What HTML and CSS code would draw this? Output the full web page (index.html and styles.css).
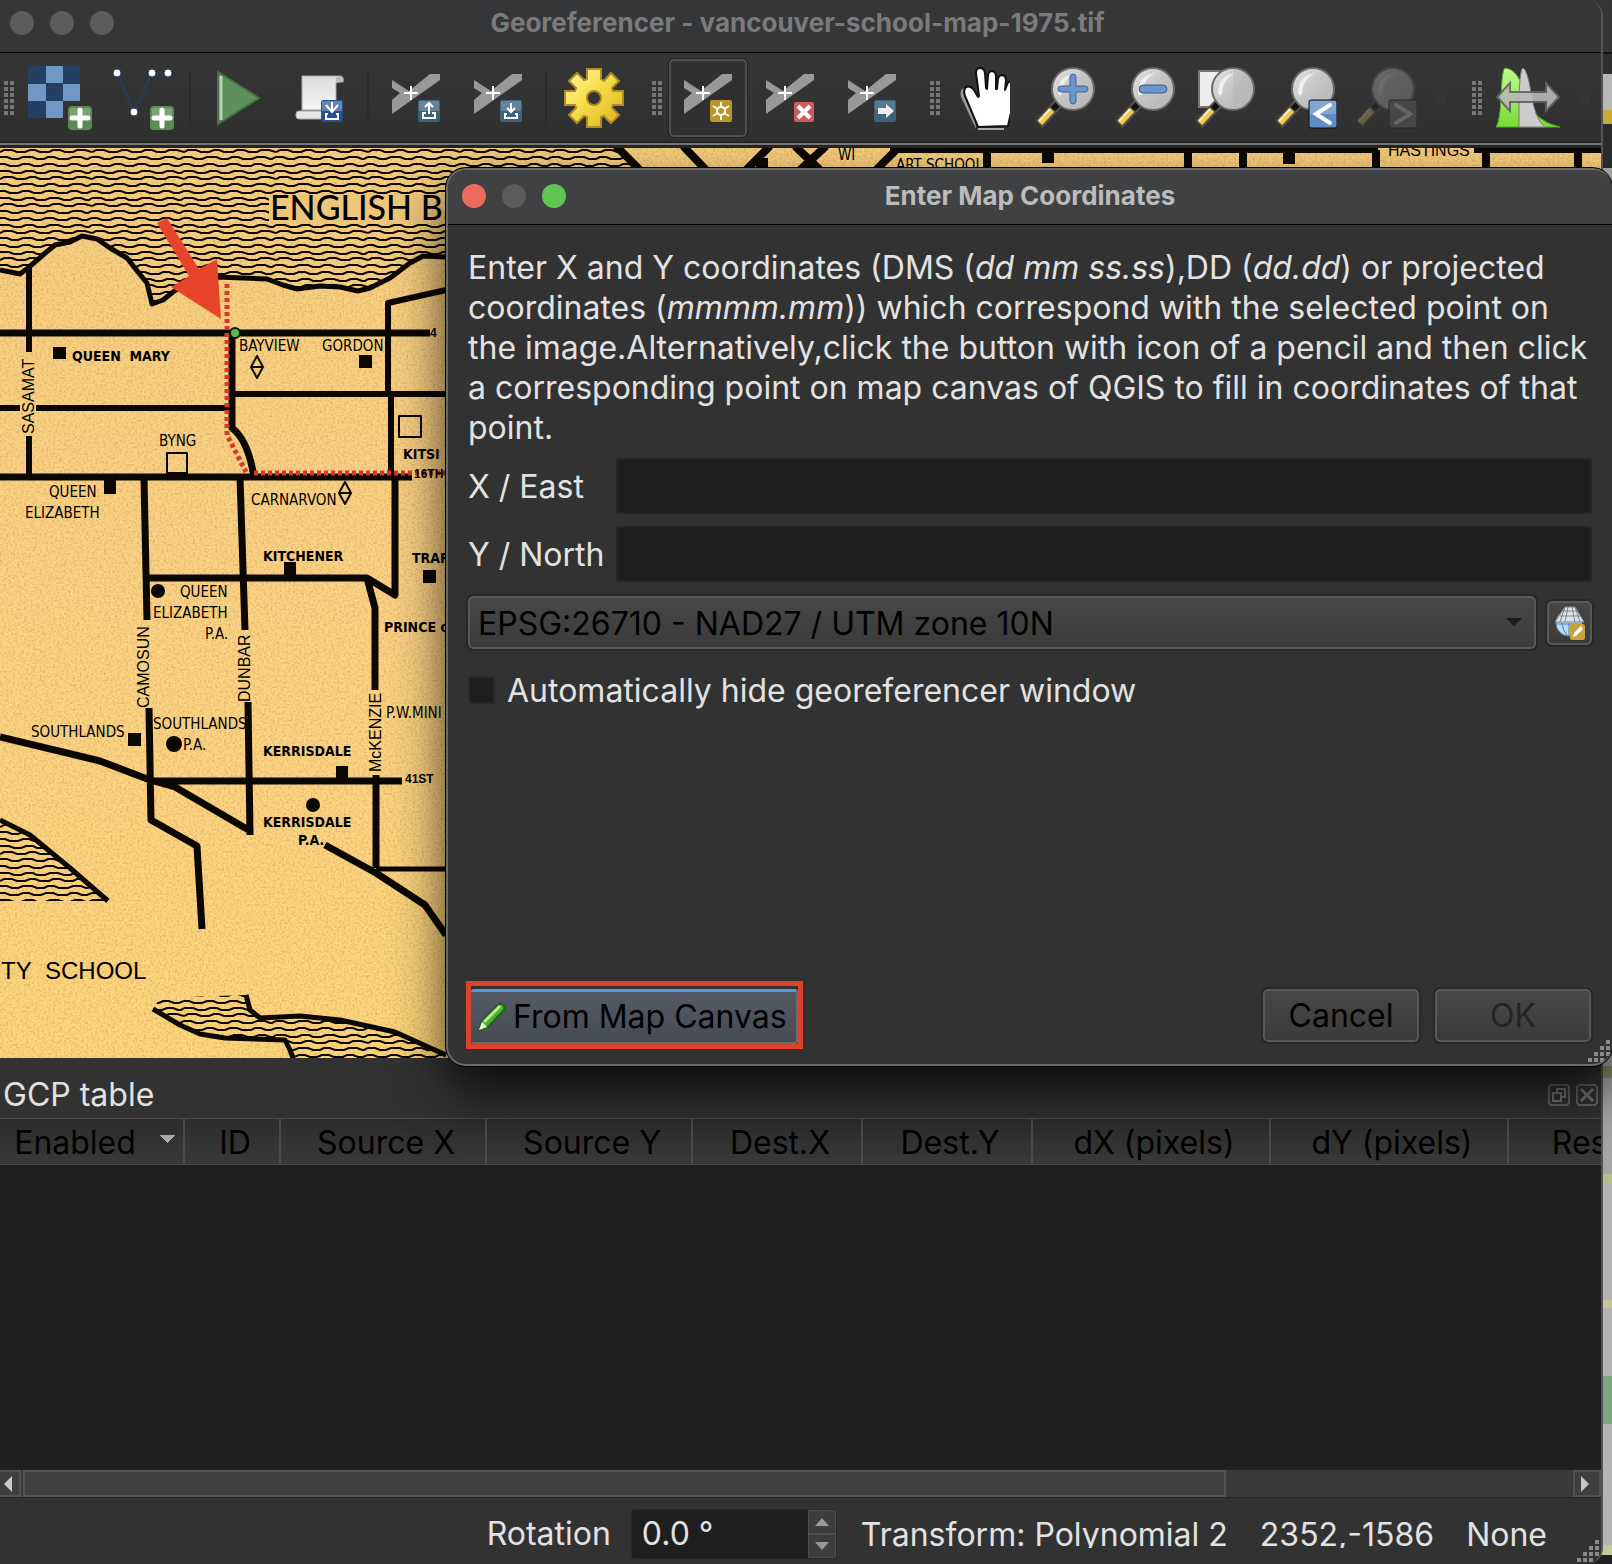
FILE: index.html
```html
<!DOCTYPE html>
<html lang="en">
<head>
<meta charset="utf-8">
<title>Georeferencer - vancouver-school-map-1975.tif</title>
<link rel="stylesheet" href="styles.css">
</head>
<body>
<svg class="defs" width="0" height="0" aria-hidden="true">
  <defs>
    <linearGradient id="lens" x1="0" y1="0" x2="1" y2="1"><stop offset="0" stop-color="#e6e6e6"/><stop offset=".5" stop-color="#c4c4c4"/><stop offset="1" stop-color="#b4b4b4"/></linearGradient>
    <linearGradient id="gold" x1="0" y1="0" x2="1" y2="1"><stop offset="0" stop-color="#fff6a8"/><stop offset=".45" stop-color="#f8de48"/><stop offset="1" stop-color="#d9ae20"/></linearGradient>
    <linearGradient id="paper" x1="0" y1="0" x2="0" y2="1"><stop offset="0" stop-color="#dcdcdc"/><stop offset="1" stop-color="#f4f4f4"/></linearGradient>
    <linearGradient id="peak" x1="0" y1="0" x2="0" y2="1"><stop offset="0" stop-color="#bdfb8c"/><stop offset="1" stop-color="#77dd2f"/></linearGradient>
    <symbol id="plus" viewBox="0 0 24 24"><rect width="24" height="24" rx="4" fill="#5a8c54"/><path d="M2 12V4q0-2 2-2h16q2 0 2 2v8z" fill="#79a674"/><path d="M12 4v16M4 12h16" stroke="#fff" stroke-width="5" stroke-linecap="round"/></symbol>
    <symbol id="point" viewBox="0 0 48 48"><path d="M0 6l17 11L38 0h10v6L0 40V26l8-7-8-5z" fill="#999"/><path d="M19 12v14M12 19h14" stroke="#fff" stroke-width="2"/></symbol>
    <symbol id="glass" viewBox="0 0 64 64"><path d="M6 58L25 38" stroke="#55524a" stroke-width="10"/><path d="M7 57L19 44" stroke="#f2c84f" stroke-width="6"/><path d="M6 55L17 43" stroke="#fff0b0" stroke-width="2"/><path d="M20 43l5-5" stroke="#111" stroke-width="6"/><circle cx="40" cy="23" r="21" fill="url(#lens)" stroke="#696969" stroke-width="2"/><path d="M25 27q0-17 17-20-12 6-13 20-2 5-4 0z" fill="#f6f6f6" opacity=".85"/></symbol>
    <symbol id="down" viewBox="0 0 22 22"><rect width="22" height="22" rx="2" fill="#3d627b"/><path d="M1 1h20v10H1z" fill="#668497"/><path d="M11 3v9M7 8l4 4 4-4M7 14H5v4h12v-4h-2" fill="none" stroke="#fff" stroke-width="2"/></symbol>
  </defs>
</svg>

<main class="window">
  <header class="titlebar">
    <span class="lights"><i></i><i></i><i></i></span>
    <h1>Georeferencer - vancouver-school-map-1975.tif</h1>
  </header>

  <nav class="toolbar" aria-label="Georeferencer tools">
    <span class="grip first"></span>
    <button class="tool" aria-label="Open raster"><svg width="64" height="64" viewBox="0 0 64 64"><path fill="#243f62" d="M0 0h52v35H35v17H0z"/><path fill="#7098c6" d="M18 0h17v17H18zM0 18h18v17H0zM35 18h17v17H35zM18 35h17v17H18z"/><use href="#plus" x="40" y="40" width="24" height="24"/></svg></button>
    <button class="tool" aria-label="Open vector"><svg width="64" height="64" viewBox="0 0 64 64"><path d="M7 7l17 39L42 7h16" fill="none" stroke="#2b3a4e" stroke-width="3"/><g fill="#fff" stroke="#263c58"><circle cx="7" cy="7" r="4"/><circle cx="24" cy="46" r="4"/><circle cx="42" cy="7" r="4"/><circle cx="58" cy="7" r="4"/></g><use href="#plus" x="40" y="40" width="24" height="24"/></svg></button>
    <span class="sep"></span>
    <button class="tool" aria-label="Start georeferencing"><svg width="64" height="64" viewBox="0 0 64 64"><path d="M12 6l41 26-41 26z" fill="#5d905a" stroke="#477444" stroke-width="2"/><path d="M15 10v44" stroke="#b9d4b6" stroke-width="3"/></svg></button>
    <button class="tool" aria-label="Generate GDAL script"><svg width="64" height="64" viewBox="0 0 64 64"><path d="M14 10h38q4 0 3 6h-7v28H14z" fill="url(#paper)" stroke="#aaa"/><path d="M48 17v-4q0-3 4-3 4 2 2 6z" fill="#bbb"/><rect x="8" y="45" width="38" height="8" rx="3" fill="#e6e6e6" stroke="#aaa"/><rect x="33" y="34" width="22" height="22" rx="2" fill="#294f93"/><path d="M34 35h20v10H34z" fill="#6584b6"/><path d="M44 36v9M38 39l6 7 6-7M40 48h-2v5h12v-5h-2" fill="none" stroke="#fff" stroke-width="2"/></svg></button>
    <span class="sep"></span>
    <button class="tool" aria-label="Load GCP points"><svg width="48" height="48" viewBox="0 0 48 48"><use href="#point"/><rect x="26" y="26" width="22" height="22" rx="2" fill="#3d627b"/><path d="M27 27h20v10H27z" fill="#668497"/><path d="M37 40V29M33 33l4-4 4 4M34 39h-3v5h12v-5h-3" fill="none" stroke="#fff" stroke-width="2"/></svg></button>
    <button class="tool" aria-label="Save GCP points"><svg width="48" height="48" viewBox="0 0 48 48"><use href="#point"/><use href="#down" x="26" y="26" width="22" height="22"/></svg></button>
    <span class="sep"></span>
    <button class="tool" aria-label="Transformation settings"><svg width="60" height="60" viewBox="-30 -30 60 60"><path d="M-7-29H7V-19L10-17 17-25 25-17 18-10 19-7H29V7H19L18 10 25 17 17 25 10 18 7 19V29H-7V19L-10 18-17 25-25 17-18 10-19 7H-29V-7H-19L-18-10-25-17-17-25-10-18-7-19Z" fill="url(#gold)" stroke="#b08c26" stroke-width="2"/><circle r="7" fill="#333" stroke="#a98823" stroke-width="2"/></svg></button>

    <span class="grip"></span>
    <button class="tool active" aria-label="Add point" aria-pressed="true"><svg width="48" height="48" viewBox="0 0 48 48"><use href="#point"/><rect x="26" y="26" width="22" height="22" rx="2" fill="#b8972f"/><path d="M37 28v18M29 32l16 10M45 32L29 42" stroke="#fff8d8" stroke-width="2"/><circle cx="37" cy="37" r="4" fill="#b8972f" stroke="#fff" stroke-width="2"/></svg></button>
    <button class="tool" aria-label="Delete point"><svg width="48" height="48" viewBox="0 0 48 48"><use href="#point"/><rect x="28" y="28" width="20" height="20" rx="2" fill="#cf5c5c"/><path d="M32 32l12 12M44 32L32 44" stroke="#fff" stroke-width="4"/></svg></button>
    <button class="tool" aria-label="Move point"><svg width="48" height="48" viewBox="0 0 48 48"><use href="#point"/><rect x="26" y="26" width="22" height="22" rx="2" fill="#3d627b"/><path d="M27 27h20v9H27z" fill="#587a8f"/><path d="M30 34h8v-4l8 7-8 7v-4h-8z" fill="#eee"/></svg></button>

    <span class="grip"></span>
    <button class="tool zoom" aria-label="Pan"><svg width="50" height="64" viewBox="0 0 50 64"><path d="M16 63L1 31q-2-9 5-9l7 8z" fill="#999"/><path d="M18 61L13 49 5 30q-2-6 1-9 4-2 8 3l4 7 1-1L16 7q0-5 4-5 4 0 5 5l1 15 1 1 1-14q1-4 4-4 4 1 4 5v13h1l1-10q1-4 4-4 4 1 4 5l-1 10 2-5q1-4 4-3 3 1 2 6l-1 20-4 18z" fill="#fff" stroke="#111" stroke-width="2" stroke-linejoin="round"/><path d="M18 63h26" stroke="#aaa" stroke-width="2"/></svg></button>
    <button class="tool zoom" aria-label="Zoom in"><svg width="64" height="64" viewBox="0 0 64 64"><use href="#glass"/><path d="M40 8q3 0 3 3v9h9q3 0 3 3t-3 3h-9v9q0 3-3 3t-3-3v-9h-9q-3 0-3-3t3-3h9v-9q0-3 3-3z" fill="#6d96c8" stroke="#3f669a"/></svg></button>
    <button class="tool zoom" aria-label="Zoom out"><svg width="64" height="64" viewBox="0 0 64 64"><use href="#glass"/><rect x="26" y="19" width="28" height="8" rx="4" fill="#6d96c8" stroke="#3f5f8a"/></svg></button>
    <button class="tool zoom" aria-label="Zoom to layer"><svg width="64" height="64" viewBox="0 0 64 64"><path d="M6 5h34v36H6z" fill="#ededed" stroke="#777" stroke-width="2"/><use href="#glass"/><path d="M40 3v40q18-1 20-20Q58 4 40 3z" fill="#b4b4b4" opacity=".4"/></svg></button>
    <button class="tool zoom" aria-label="Zoom last"><svg width="64" height="64" viewBox="0 0 64 64"><use href="#glass"/><rect x="36" y="34" width="28" height="28" rx="2" fill="#5f8cc4" stroke="#111"/><path d="M37 48V35h26v13z" fill="#83a7d2"/><path d="M57 39L43 48l14 9" fill="none" stroke="#fff" stroke-width="4" stroke-linecap="round"/></svg></button>
    <button class="tool zoom" aria-label="Zoom next" disabled><svg width="64" height="64" viewBox="0 0 64 64"><use href="#glass"/><rect x="36" y="34" width="28" height="28" rx="2" fill="#77797c" stroke="#111"/><path d="M43 39l14 9-14 9" fill="none" stroke="#ddd" stroke-width="4" stroke-linecap="round"/></svg></button>
    <span class="more">»</span>

    <span class="grip"></span>
    <button class="tool" aria-label="Full histogram stretch"><svg width="64" height="64" viewBox="0 0 64 64"><path d="M0 61q4-5 5-30Q6 3 9 2q14 1 21 30 9 24 34 29z" fill="url(#peak)" stroke="#55a52a"/><path d="M23 61V30Q24 2 27 2q4 1 8 24 4 28 14 35z" fill="#ccc" stroke="#777"/><path d="M1 31L14 17v9h36v-9l13 14-13 14v-9H14v9z" fill="#b9bab7" stroke="#60645e" stroke-width="2" opacity=".9"/></svg></button>
    <span class="more">»</span>
  </nav>

  <section class="canvas" aria-label="Map canvas">
    <svg class="map" viewBox="0 148 1602 910" preserveAspectRatio="xMinYMin slice">
      <defs>
        <pattern id="waves" width="92" height="27" patternUnits="userSpaceOnUse"><g fill="none" stroke="#0d0803" stroke-width="2"><path d="M0 2h5l5 2h8l5-2h6l5 2h7l5-2h7l5 2h9l4-2h6l5 2h5l5-2"/><path d="M0 9h9l5 2h7l5-2h7l4 2h8l5-2h8l6 2h6l5-2h6l5 2h3l3-2"/><path d="M0 17l4-2h8l5 2h8l5-2h5l5 2h9l4-2h7l5 2h8l4-2h8l7 2"/><path d="M0 22h7l5 2h6l5-2h9l5 2h7l4-2h6l5 2h9l5-2h8l5 2h2l4-2"/></g></pattern>
        <filter id="grain" x="0" y="0" width="100%" height="100%"><feTurbulence type="fractalNoise" baseFrequency=".45" numOctaves="2" seed="4"/><feColorMatrix values="0 0 0 0 .45  0 0 0 0 .25  0 0 0 0 .05  1.6 0 0 0 -.68"/></filter>
        <linearGradient id="land" x1="0" y1="0" x2="0" y2="1"><stop offset="0" stop-color="#f8cf80"/><stop offset=".5" stop-color="#fcd286"/><stop offset="1" stop-color="#fdd67c"/></linearGradient>
      </defs>
      <rect y="148" width="1602" height="910" fill="url(#land)"/>
      <rect class="speckle" y="148" width="1602" height="910" filter="url(#grain)"/>
      <path fill="url(#waves)" d="M0 148H616L640 172V257H445L423 256 410 263 390 278 370 288 358 291 340 287 320 286 297 289 283 285 267 279 233 277 217 277 187 283 173 292 163 300 152 305 147 283 138 272 127 258 110 248 97 239 82 236 70 242 55 245 43 255 28 268 20 274 0 270z"/>
      <path fill="url(#waves)" d="M0 820L30 835 70 868 107 901H0zM153 1009L160 998 245 995 250 1010 260 1018 340 1020 395 1032 446 1055V1058H293L285 1040 225 1038 200 1034 180 1025z"/>
      <path fill="#eec67a" d="M269 194H446V224H269z"/>
      <g fill="none" stroke="#0b0703" stroke-linejoin="round">
        <path stroke-width="5" d="M0 270L20 274 28 268 43 255 55 245 70 242 82 236 97 239 110 248 127 258 138 272 147 283 152 304 163 300 173 292 187 283 217 277 267 279 283 285 297 289 320 286 340 287 358 291 370 288 390 278 410 263 423 256 446 257"/>
        <path stroke-width="6" d="M29 268V352M29 436V477M0 408H20M36 408H230M235 394H446M388 394V303L446 290M391 394V477"/>
        <path stroke-width="7" d="M0 333H430M0 477H412M232 335V428Q248 440 254 477M144 478L147 620M149 708L151 820 197 846 202 929M240 478L245 630M248 702L250 835M148 578H367L395 595V477M367 578L375 608V690M376 775V868M150 781H402M0 737L100 761 150 780 175 787 252 832M325 845L376 873 425 905 446 935"/>
        <path stroke-width="5" d="M376 869H446M0 820L30 835 70 868 108 901M153 1009L180 1025 200 1034 225 1038 285 1040 290 1050 293 1058M246 995L250 1010 260 1018 300 1016 340 1020 395 1032 446 1055"/>
        <path stroke-width="8" d="M616 146L642 172M683 146L708 172M770 146L744 172M795 146L822 172M826 146L798 172M900 146L874 172M987 150V170M1188 150V170M1243 150V170M1376 150V170M1486 150V170M1578 150V170M890 149H1378M1474 149H1602"/>
        <path stroke-width="12" d="M1048 150V163M1289 150V164M762 158V170"/>
        <g stroke-width="2"><path d="M167 453h20v20h-20zM399 416h22v21h-22zM257 356l6 11-6 11-6-11zM251 367h12M345 482l6 11-6 11-6-11zM339 493h12"/></g>
      </g>
      <g fill="#0b0703"><path d="M53 347h13v12H53zM359 355h13v13h-13zM104 480h12v14h-12zM284 562h12v14h-12zM423 570h13v13h-13zM128 733h13v13h-13zM336 766h12v14h-12z"/><circle cx="158" cy="591" r="7"/><circle cx="174" cy="744" r="8"/><circle cx="313" cy="805" r="7"/></g>
      <path fill="none" stroke="#d5382c" stroke-width="5" stroke-dasharray="4 3" d="M227 284V435L246 472M254 473H446"/>
      <text class="sea" x="270" y="220">ENGLISH B.</text>
      <g class="school bold"><text x="72" y="361">QUEEN&#160; MARY</text><text x="263" y="561">KITCHENER</text><text x="412" y="563">TRAF</text><text x="384" y="632">PRINCE o</text><text x="263" y="756">KERRISDALE</text><text x="263" y="827">KERRISDALE</text><text x="298" y="845">P.A.</text><text x="403" y="459">KITSI</text></g>
      <g class="school"><text x="239" y="351">BAYVIEW</text><text x="322" y="351">GORDON</text><text x="159" y="446">BYNG</text><text x="49" y="497">QUEEN</text><text x="25" y="518">ELIZABETH</text><text x="251" y="505">CARNARVON</text><text x="180" y="597">QUEEN</text><text x="153" y="618">ELIZABETH</text><text x="205" y="639">P.A.</text><text x="31" y="737">SOUTHLANDS</text><text x="153" y="729">SOUTHLANDS</text><text x="183" y="750">P.A.</text><text x="386" y="718">P.W.MINI</text><text x="896" y="170">ART SCHOOL</text><text x="838" y="160">WI</text></g>
      <g class="street"><text x="-434" y="34" transform="rotate(-90)">SASAMAT</text><text x="-708" y="149" transform="rotate(-90)">CAMOSUN</text><text x="-702" y="250" transform="rotate(-90)">DUNBAR</text><text x="-772" y="381" transform="rotate(-90)">McKENZIE</text></g>
      <g class="avenue"><text x="414" y="478">16TH</text><text x="405" y="783">41ST</text><text x="430" y="337">4</text></g>
      <text class="street" x="1388" y="156">HASTINGS</text>
      <text class="big" x="1" y="979">TY&#160; SCHOOL</text>
      <path fill="#e8442b" d="M157 223L167 218 199 269 217 259 221 319 171 287 189 276z"/>
      <circle cx="235" cy="333" r="5" fill="#57bb45" stroke="#111" stroke-width="2"/>
    </svg>
  </section>

  <section class="gcp">
    <header class="dock-title">
      <h2>GCP table</h2>
      <button class="mini" aria-label="Float panel"><svg width="22" height="22" viewBox="0 0 22 22" fill="none" stroke="#777" stroke-width="2"><path d="M3 1h16l2 2v16l-2 2H3l-2-2V3z" stroke="#666"/><path d="M5 9h8v8H5zM9 8V5h8v8h-3"/></svg></button>
      <button class="mini" aria-label="Close panel"><svg width="22" height="22" viewBox="0 0 22 22" fill="none" stroke="#777" stroke-width="2"><path d="M3 1h16l2 2v16l-2 2H3l-2-2V3z" stroke="#666"/><path d="M5 5l12 12M17 5L5 17" stroke-width="3"/></svg></button>
    </header>
    <div class="table-view">
      <table>
        <colgroup><col class="c-enabled"><col class="c-id"><col class="c-source"><col class="c-source"><col class="c-dest"><col class="c-dest"><col class="c-delta"><col class="c-delta"><col class="c-residual"></colgroup>
        <thead><tr><th class="sorted">Enabled</th><th>ID</th><th>Source X</th><th>Source Y</th><th>Dest.X</th><th>Dest.Y</th><th>dX (pixels)</th><th>dY (pixels)</th><th>Residual (pixels)</th></tr></thead>
      </table>
    </div>
    <div class="scrollbar">
      <button class="arrow" aria-label="Scroll left"><svg width="8" height="16" viewBox="0 0 8 16"><path d="M8 0v16L0 8z" fill="#c8c8c8"/></svg></button>
      <div class="track"><div class="thumb"></div></div>
      <button class="arrow end" aria-label="Scroll right"><svg width="8" height="16" viewBox="0 0 8 16"><path d="M0 0v16l8-8z" fill="#c8c8c8"/></svg></button>
    </div>
  </section>

  <footer class="status">
    <label for="rotation">Rotation</label>
    <span class="spin"><input id="rotation" type="text" value="0.0 °"><span class="steps"><button aria-label="Increase"><svg width="14" height="8" viewBox="0 0 14 8"><path d="M0 8h14L7 0z" fill="#999"/></svg></button><button aria-label="Decrease"><svg width="14" height="8" viewBox="0 0 14 8"><path d="M0 0h14L7 8z" fill="#999"/></svg></button></span></span>
    <span class="readout">Transform: Polynomial 2</span>
    <span class="readout">2352,-1586</span>
    <span class="readout">None</span>
    <svg class="sizegrip" width="24" height="24" viewBox="0 0 24 24"><path d="M18 0h4v4h-4zM12 6h4v4h-4zM18 6h4v4h-4zM6 12h4v4H6zM12 12h4v4h-4zM18 12h4v4h-4zM0 18h4v4H0zM6 18h4v4H6zM12 18h4v4h-4z" fill="#8a8a8a"/></svg>
  </footer>
</main>

<section class="dialog" role="dialog" aria-labelledby="dialog-title">
  <header class="dialog-title">
    <span class="lights"><i class="red"></i><i></i><i class="green"></i></span>
    <h2 id="dialog-title">Enter Map Coordinates</h2>
  </header>
  <form class="dialog-body">
    <p>Enter X and Y coordinates (DMS (<em>dd mm ss.ss</em>),DD (<em>dd.dd</em>) or projected<br>coordinates (<em>mmmm.mm</em>)) which correspond with the selected point on<br>the image.Alternatively,click the button with icon of a pencil and then click<br>a corresponding point on map canvas of QGIS to fill in coordinates of that<br>point.</p>
    <div class="fields">
      <label for="east">X / East</label><input id="east" type="text">
      <label for="north">Y / North</label><input id="north" type="text">
    </div>
    <div class="crs">
      <span class="combo"><select aria-label="Coordinate reference system"><option>EPSG:26710 - NAD27 / UTM zone 10N</option></select><svg width="16" height="8" viewBox="0 0 16 8"><path d="M0 0h16L8 8z" fill="#1b1b1b"/></svg></span>
      <button class="crs-pick" type="button" aria-label="Select CRS"><svg width="32" height="34" viewBox="0 0 32 34"><circle cx="15" cy="17" r="13" fill="#b9dcf4" stroke="#5b87ad"/><path d="M3 18h24M15 17v13M8 17q1 8 5 12M22 17q-1 8-5 12" fill="none" stroke="#547ea3"/><path d="M11 1h10l9 15H1z" fill="#dfe3e6" stroke="#7c858c"/><path d="M9 5h14M6 10h20M14 1l-3 15M18 1l3 15M11 1L6 16M21 1l5 15" fill="none" stroke="#7c858c"/><rect x="16" y="18" width="15" height="16" rx="2" fill="#c8a33a"/><path d="M19 31l1-4 7-7 2 3-7 7z" fill="#fff"/></svg></button>
    </div>
    <div class="check"><input id="autohide" type="checkbox"><label for="autohide">Automatically hide georeferencer window</label></div>
    <div class="actions">
      <span class="callout"><button class="from-map" type="button"><svg width="28" height="30" viewBox="0 0 28 30"><path d="M1 28l3-9L21 2q3-1 5 2 1 2 0 4L10 25z" fill="#4cae32" stroke="#1f6417" stroke-width="2"/><path d="M6 20L22 4" stroke="#b6f08e" stroke-width="3"/><path d="M1 28l3-8 5 5z" fill="#efffd9"/></svg>From Map Canvas</button></span>
      <button class="push" type="button">Cancel</button>
      <button class="push" type="button" disabled>OK</button>
    </div>
  </form>
  <svg class="sizegrip" width="24" height="24" viewBox="0 0 24 24"><path d="M18 0h4v4h-4zM12 6h4v4h-4zM18 6h4v4h-4zM6 12h4v4H6zM12 12h4v4h-4zM18 12h4v4h-4zM0 18h4v4H0zM6 18h4v4H6zM12 18h4v4h-4z" fill="#8a8a8a"/></svg>
</section>
</body>
</html>
```
FILE: styles.css
```css
* { box-sizing: border-box; }

body {
  margin: 0;
  min-height: 100vh;
  position: relative;
  overflow-x: hidden;
  color: #e2e2e2;
  font: 32px/40px Inter, "Liberation Sans", sans-serif;
  background: linear-gradient(#343536 0 52px, #111 52px 54px, #2f2f2f 54px 74px, #b8b8b8 74px 110px, #c9a93a 110px 124px, #2b2b2b 124px 168px, #aaa 168px 1066px, #8f8f62 1066px 1078px, #a5a5a7 1078px 1174px, #b9bd8c 1174px 1184px, #b4b4b6 1184px 1300px, #c4c69a 1300px 1308px, #b4b4b6 1308px 1376px, #7fa683 1376px 1424px, #b4b4b6 1424px 1545px, #c6c99a 1545px 1555px, #222 1555px);
}

h1, h2, p { margin: 0; font: inherit; }
button, input, select { font: inherit; color: #000; margin: 0; padding: 0; border: 0; }
svg { display: block; }
.defs { position: absolute; }

.window {
  display: flex;
  flex-direction: column;
  min-height: 100vh;
  margin-right: 9px;
  overflow: hidden;
  background: #323232;
  border-right: 2px solid #555;
  border-radius: 0 16px 16px 0;
}

.titlebar, .dialog-title {
  display: grid;
  grid-template-columns: 1fr auto 1fr;
  align-items: center;
  font-size: 26px;
  font-weight: 700;
  line-height: 32px;
}
.titlebar { height: 53px; padding: 0 16px 6px 10px; background: #353638; border-bottom: 1px solid #000; color: #7b7b7c; }
.lights { display: flex; gap: 16px; }
.lights i { width: 24px; height: 24px; border-radius: 50%; background: #5b5c5e; }
.lights .red { background: #ed6a5e; }
.lights .green { background: #61c554; }

.toolbar {
  display: flex;
  align-items: center;
  height: 95px;
  padding-bottom: 6px;
  background: linear-gradient(#353535, #303030 88px, #222 89px 90px, #777 90px 92px, #242424 92px);
}
.tool { flex: none; width: 82px; height: 78px; display: grid; place-items: center; background: none; }
.tool.zoom { width: 80px; }
.tool.active { width: 78px; margin: 0 2px; border: 2px solid #505050; border-radius: 5px; outline: 1px solid #232323; background: #303030; }
.tool:disabled { opacity: .3; }
.sep { flex: none; width: 2px; height: 54px; margin: 0 6px; background: #2b2b2b; }
.grip { flex: none; width: 10px; height: 34px; margin: 0 5px 0 17px; background: conic-gradient(from 270deg at 4px 4px, #777 25%, transparent 0) 0 0 / 6px 6px; }
.grip.first { margin-left: 4px; }
.more { flex: none; width: 30px; text-align: center; color: #37383c; font-size: 26px; }

.canvas { flex: none; height: 910px; background: #f6cd7b; }
.map { width: 100%; height: 100%; }
.speckle { opacity: .6; }
.sea { font: 500 34px Lato, sans-serif; }
.school { font: 15px "Liberation Sans Narrow", "DejaVu Sans Condensed", sans-serif; }
.school.bold { font-weight: 700; font-size: 14px; }
.street { font: 16px "Liberation Sans", sans-serif; }
.avenue { font: bold 12px "Liberation Sans", sans-serif; }
.big { font: 24px "Liberation Sans", sans-serif; }

.gcp { flex: 1; display: flex; flex-direction: column; }
.dock-title { display: flex; align-items: center; gap: 6px; height: 60px; padding: 14px 3px 0 3px; }
.dock-title h2 { flex: 1; }
.mini { background: none; }
.table-view { flex: 1; min-height: 300px; overflow: hidden; background: #1e1e1e; }
table { table-layout: fixed; width: 1838px; border-collapse: separate; border-spacing: 0; }
th { height: 47px; padding: 3px 0 0 6px; font-weight: 400; color: #000; background: linear-gradient(#2c2c2c, #393939); border: solid #4a4a4a; border-width: 1px 2px 1px 0; }
th.sorted { padding: 3px 33px 0 0; background: conic-gradient(from 315deg at 50% 100%, #aaa 25%, transparent 0) 160px 16px / 15px 8px no-repeat, linear-gradient(#2c2c2c, #393939); }
.c-enabled { width: 185px; }
.c-id { width: 96px; }
.c-source { width: 206px; }
.c-dest { width: 170px; }
.c-delta { width: 238px; }

.scrollbar { display: flex; height: 29px; background: #3a3a3a; border: solid #252525; border-width: 1px 0; }
.arrow { width: 21px; padding-right: 4px; display: grid; place-items: center; background: #3e3e3e; border: 2px solid #505050; border-left: 0; }
.arrow.end { width: 28px; border-left: 2px solid #505050; }
.track { flex: 1; display: flex; padding-left: 2px; }
.thumb { flex: 0 0 calc(78% - 6px); background: #404040; border: 2px solid #535353; }

.status { position: relative; display: flex; align-items: center; justify-content: flex-end; height: 66px; padding: 6px 54px 0 0; }
.status label { margin-right: 20px; }
.spin { display: flex; width: 206px; height: 50px; background: #1e1e1e; border: 1px solid #292929; border-radius: 4px; overflow: hidden; }
.spin input { flex: 1; min-width: 0; padding-left: 10px; background: none; color: #e2e2e2; }
.steps { display: grid; width: 28px; }
.steps button { display: grid; place-items: center; background: #3d3d3d; border: 1px solid #4d4d4d; }
.readout { height: 27px; line-height: 27px; margin-left: 32px; overflow: hidden; white-space: nowrap; }
.spin + .readout { margin-left: 24px; }
.sizegrip { position: absolute; right: 0; bottom: 0; }

.dialog {
  position: absolute;
  top: 168px;
  left: 446px;
  right: 0;
  height: 898px;
  display: flex;
  flex-direction: column;
  overflow: hidden;
  background: #323232;
  border: solid #6a6a6a;
  border-width: 2px 0 2px 2px;
  border-radius: 20px;
  box-shadow: 0 0 0 1px #000, 0 26px 52px rgba(0, 0, 0, .75);
}
.dialog-title { height: 55px; padding: 0 14px 2px; background: #404143; border-bottom: 1px solid #000; color: #bcbcbc; }
.dialog-body { flex: 1; display: flex; flex-direction: column; padding: 23px 20px 15px; }
.dialog-body p { white-space: nowrap; margin-bottom: 10px; }
.fields { display: grid; grid-template-columns: auto 1fr; gap: 12px; align-items: center; }
.fields label { padding-top: 2px; }
.fields input { height: 56px; min-width: 0; padding: 0 10px; color: #e2e2e2; background: #1e1e1e; border: 2px solid #262626; border-radius: 4px; }
.crs { display: flex; align-items: center; gap: 11px; margin-top: 14px; }
.combo { flex: 1; position: relative; }
.combo svg { position: absolute; right: 14px; top: 22px; }
select { appearance: none; display: block; width: 100%; height: 53px; padding: 2px 0 0 8px; }
select, .crs-pick, .push { background: linear-gradient(#474747, #3b3b3b); border: 2px solid #595959; border-radius: 5px; outline: 2px solid #282828; }
.crs-pick { width: 45px; height: 44px; display: grid; place-items: center; }
.check { display: flex; align-items: center; gap: 12px; margin-top: 20px; }
.check input { appearance: none; width: 27px; height: 28px; background: #1e1e1e; border: 2px solid #292929; }
.check label { padding-top: 2px; }
.actions { display: flex; align-items: center; gap: 16px; margin: auto 0 0 -2px; }
.callout { margin-right: auto; padding: 3px 0 0; border: 5px solid #dd432c; }
.from-map { display: flex; align-items: center; gap: 7px; height: 55px; width: 327px; padding-left: 7px; white-space: nowrap; background: linear-gradient(#555b66, #464a51); border: solid #686c74; border-width: 2px 2px 2px 0; border-top: 3px solid #5f97d5; border-radius: 3px; }
.push { width: 156px; height: 53px; padding-top: 2px; }
.push:last-child { margin-right: 1px; }
.push:disabled { color: #242424; }
```
